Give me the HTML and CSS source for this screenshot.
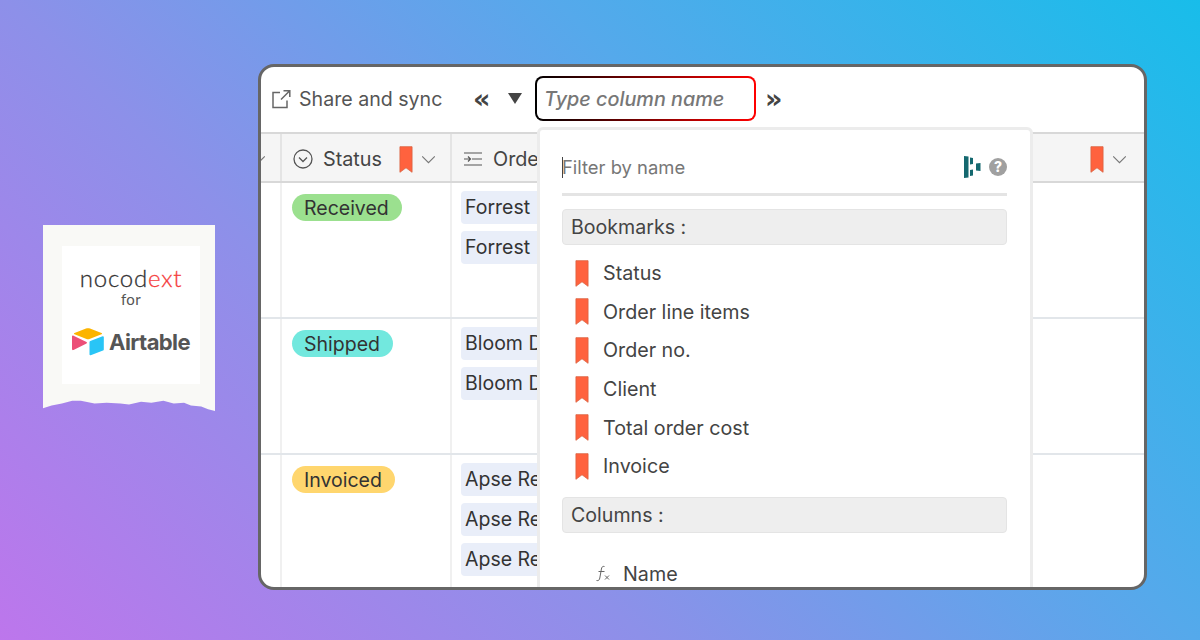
FILE: index.html
```html
<!DOCTYPE html>
<html lang="en">
<head>
<meta charset="utf-8">
<title>nocodext for Airtable</title>
<link rel="stylesheet" href="styles.css">
</head>
<body>
<svg class="defs" width="0" height="0" aria-hidden="true">
  <symbol id="mark" viewBox="0 0 14 28"><path d="M.7.7h12.600v26.600L7 22.600.7 27.300z" fill="#ff623e" stroke="#d9603f" stroke-width=".8"/></symbol>
  <symbol id="chev" viewBox="0 0 16 10"><path d="M1 1.500l7 7 7-7" fill="none" stroke="#777" stroke-width="1.300"/></symbol>
</svg>
<main class="stage">
  <aside class="card">
    <div class="card-inner">
      <div class="brand">nocod<span class="brand-red">ext</span></div>
      <div class="for">for</div>
      <div class="airtable">
        <svg class="at-logo" viewBox="0 0 32 28" width="32" height="28" aria-hidden="true">
          <path d="M14 .5 2.500 5c-.7.3-.7 1 0 1.300L14.500 11c1 .4 2 .4 3 0L29.500 6.300c.7-.3.7-1 0-1.300L18 .5c-1.300-.5-2.700-.5-4 0z" fill="#fcb400"/>
          <path d="M17.500 14v12.500c0 .6.600 1 1.200.8L31 22.500c.5-.2.8-.6.800-1.100V9c0-.6-.6-1-1.200-.8L18.300 13c-.5.200-.8.500-.8 1z" fill="#29c5f6"/>
          <path d="M0 8.500v12.800c0 .7.800 1.200 1.500.8L14.500 15.500c.6-.3.600-1.100 0-1.400L1.500 7.700C.8 7.400 0 7.800 0 8.500z" fill="#ec4f78"/>
        </svg>
        <span class="at-word">Airtable</span>
      </div>
    </div>
  </aside>

  <section class="window">
    <header class="toolbar">
      <div class="share">
        <svg class="share-icon" viewBox="0 0 20 20" width="20" height="20" aria-hidden="true"><path d="M9 3.500H2v15h14v-7M10 10.500 18.500 2M12.500 1.700h6.300V8" fill="none" stroke="#666" stroke-width="1.500"/></svg>
        <span>Share and sync</span>
      </div>
      <span class="nav nav-prev">«</span>
      <svg class="caret" viewBox="0 0 14 11" width="14" height="11" aria-hidden="true"><path d="M0 0h14L7 11z" fill="#444"/></svg>
      <div class="search"><span>Type column name</span></div>
      <span class="nav nav-next">»</span>
    </header>

    <div class="table">
      <div class="head">
        <div class="hcell hcell-edge"><svg class="chev chev-edge"><use href="#chev"/></svg></div>
        <div class="hcell hcell-status">
          <svg class="status-icon" viewBox="0 0 20 20" width="20" height="20" aria-hidden="true"><circle cx="10" cy="10" r="9" fill="none" stroke="#555" stroke-width="1.300"/><path d="M6 8.500l4 4 4-4" fill="none" stroke="#555" stroke-width="1.300"/></svg>
          <span class="hlabel">Status</span>
          <svg class="mark-head"><use href="#mark"/></svg>
          <svg class="chev"><use href="#chev"/></svg>
        </div>
        <div class="hcell hcell-order">
          <svg class="lines-icon" viewBox="0 0 20 16" width="20" height="16" aria-hidden="true"><path d="M1 2h18M9 8h10M1 14h18M1 8h6M5 5.500 7.500 8 5 10.500" fill="none" stroke="#555" stroke-width="1.200"/></svg>
          <span class="hlabel">Order</span>
        </div>
        <div class="hcell hcell-end">
          <svg class="mark-head"><use href="#mark"/></svg>
          <svg class="chev"><use href="#chev"/></svg>
        </div>
      </div>

      <div class="row">
        <div class="cell"></div>
        <div class="cell cell-status"><span class="pill pill-green">Received</span></div>
        <div class="cell cell-items"><span class="chip">Forrest</span><span class="chip">Forrest</span></div>
        <div class="cell cell-end"></div>
      </div>
      <div class="row">
        <div class="cell"></div>
        <div class="cell cell-status"><span class="pill pill-teal">Shipped</span></div>
        <div class="cell cell-items"><span class="chip">Bloom D</span><span class="chip">Bloom D</span></div>
        <div class="cell cell-end"></div>
      </div>
      <div class="row">
        <div class="cell"></div>
        <div class="cell cell-status"><span class="pill pill-yellow">Invoiced</span></div>
        <div class="cell cell-items"><span class="chip">Apse Re</span><span class="chip">Apse Re</span><span class="chip">Apse Re</span></div>
        <div class="cell cell-end"></div>
      </div>
    </div>

    <div class="popup">
      <div class="filter">
        <span class="cursor"></span>
        <span class="filter-text">Filter by name</span>
        <svg class="dash-icon" viewBox="0 0 17 22" width="17" height="22" aria-hidden="true"><path d="M0 0l4.500.6v20.800L0 22zM6 1.500l3 .5v6l-3 .5zM6 14l3-.5v6l-3 .5zM12 7.500l4.500-.5v8l-4.500-.5z" fill="#14686f"/></svg>
        <span class="help">?</span>
      </div>
      <div class="section">Bookmarks :</div>
      <ul class="marks">
        <li class="mark-row"><svg class="mark-list"><use href="#mark"/></svg>Status</li>
        <li class="mark-row"><svg class="mark-list"><use href="#mark"/></svg>Order line items</li>
        <li class="mark-row"><svg class="mark-list"><use href="#mark"/></svg>Order no.</li>
        <li class="mark-row"><svg class="mark-list"><use href="#mark"/></svg>Client</li>
        <li class="mark-row"><svg class="mark-list"><use href="#mark"/></svg>Total order cost</li>
        <li class="mark-row"><svg class="mark-list"><use href="#mark"/></svg>Invoice</li>
      </ul>
      <div class="section">Columns :</div>
      <div class="column-row">
        <svg class="fx-icon" viewBox="0 0 16 18" width="16" height="18" aria-hidden="true"><path d="M9.500 1.500C7.500 1 6.800 2 6.400 4L4.800 13c-.4 2-1.200 3-3.300 2.500M3.500 6.500h6" fill="none" stroke="#666" stroke-width="1"/><path d="M10 10.500l4 4M14 10.500l-4 4" stroke="#666" stroke-width="1"/></svg>
        <span>Name</span>
      </div>
    </div>
  </section>
</main>
</body>
</html>
```

FILE: styles.css
```css
* { box-sizing: border-box; }

html, body { margin: 0; height: 640px; overflow: hidden; }

body {
  font-family: Inter, "Liberation Sans", sans-serif;
  color: #444;
  background: linear-gradient(45deg, #bd76ec 0%, #8d90e9 35%, #55a9eb 65%, #18bdea 100%);
}

.defs { position: absolute; }

.stage {
  display: flex;
  align-items: flex-start;
  gap: 43px;
  height: 640px;
  padding: 64px 0 0 43px;
}

/* Logo card */
.card {
  flex: none;
  width: 172px;
  height: 187px;
  margin-top: 161px;
  padding: 21px 15px 0 19px;
  background: #f9f9f6;
  clip-path: polygon(0 0, 100% 0, 100% 99.500%, 96% 98.500%, 92% 97%, 86% 96.500%, 82% 95%, 76% 95.500%, 70% 94%, 63% 95%, 57% 94.500%, 50% 96%, 45% 95.500%, 37% 95%, 30% 95.500%, 22% 94%, 17% 94%, 11% 95.500%, 5% 96.500%, 0 98%);
}

.card-inner {
  display: flex;
  flex-direction: column;
  align-items: center;
  height: 138px;
  padding-top: 20px;
  background: #fff;
}

.brand {
  font-family: Lato, sans-serif;
  font-size: 24px;
  font-weight: 300;
  line-height: 24px;
  letter-spacing: .8px;
  color: #333;
  -webkit-text-stroke: .3px currentColor;
}

.brand-red { color: #f53c3c; }

.for {
  font-family: Lato, sans-serif;
  font-size: 15px;
  line-height: 18px;
  letter-spacing: .4px;
  color: #555;
}

.airtable {
  display: flex;
  align-items: center;
  gap: 5px;
  margin-top: 20px;
}

.at-word {
  font-size: 22px;
  font-weight: 700;
  letter-spacing: -.6px;
  color: #555;
}

/* Window */
.window {
  position: relative;
  flex: none;
  width: 889px;
  height: 526px;
  overflow: hidden;
  background: #fff;
  border: 3px solid #666;
  border-radius: 16px;
}

.toolbar {
  display: flex;
  align-items: center;
  height: 67px;
  padding: 0 0 2px 10px;
  border-bottom: 2px solid #d8d8d8;
  font-size: 19.600px;
  color: #555;
}

.share {
  display: flex;
  align-items: center;
  gap: 8px;
  width: 202px;
}

.share-icon { flex: none; }

.nav {
  font-family: "DejaVu Sans", sans-serif;
  font-weight: 700;
  font-size: 27px;
  line-height: 1;
  color: #444;
}

.nav-prev { width: 35px; }

.caret { flex: none; margin-right: 13px; }

.nav-next { margin-left: 9px; }

.search {
  display: flex;
  align-items: center;
  width: 221px;
  height: 45px;
  padding-left: 7px;
  border: 2px solid transparent;
  border-radius: 8px;
  background:
    linear-gradient(#fff, #fff) padding-box,
    linear-gradient(90deg, #000, #ff0000) border-box;
  font-size: 19.800px;
  font-style: italic;
  font-weight: 500;
  color: #777;
}

/* Table */
.head,
.row {
  display: grid;
  grid-template-columns: 21px 170px 85px 1fr;
}

.head {
  height: 49px;
  background: #f5f5f5;
  border-bottom: 2px solid #d8d8d8;
}

.hcell {
  display: flex;
  align-items: center;
  padding-top: 3px;
  border-right: 2px solid #e4e4e4;
  font-size: 19.800px;
  color: #444;
}

.hcell-edge { overflow: hidden; }

.hcell-status { padding-left: 11px; }

.hcell-order {
  padding-left: 11px;
  overflow: hidden;
  white-space: nowrap;
  border-right: none;
}

.hcell-end {
  justify-content: flex-end;
  gap: 8px;
  padding-right: 17px;
  border-right: none;
}

.hlabel { margin-left: 10px; }

.status-icon, .lines-icon { flex: none; }

.mark-head {
  flex: none;
  width: 14px;
  height: 27px;
}

.hcell-status .mark-head { margin: 0 8px 0 17px; }

.chev {
  flex: none;
  width: 15px;
  height: 9px;
}

.chev-edge { margin-left: -10px; }

.row {
  height: 136px;
  border-bottom: 2px solid #e2e6ea;
}

.cell { border-right: 2px solid #f0f0f0; }

.cell-status { padding-top: 11px; }

.cell-items {
  display: flex;
  flex-direction: column;
  gap: 7px;
  padding: 8px 0 0 9px;
  overflow: hidden;
  border-right: none;
}

.cell-end { border-right: none; }

.pill {
  display: inline-block;
  height: 27px;
  padding: 0 13px 0 12px;
  margin-left: 10px;
  border-radius: 14px;
  font-size: 19.500px;
  line-height: 28px;
  color: #333;
}

.pill-green { background: #9be08f; }
.pill-teal { background: #72e8de; }
.pill-yellow { background: #ffd66e; }

.chip {
  display: block;
  flex: none;
  width: 100%;
  height: 33px;
  padding-left: 4px;
  border-radius: 4px 0 0 4px;
  background: #e9eef9;
  font-size: 19.500px;
  line-height: 32px;
  white-space: nowrap;
  color: #333;
}

.row:last-child { height: 140px; border-bottom: none; }

/* Popup */
.popup {
  position: absolute;
  top: 60px;
  left: 276px;
  width: 496px;
  height: 470px;
  padding: 0 23px 0 22px;
  background: #fff;
  border: 3px solid #ececec;
  border-radius: 6px 6px 0 0;
}

.filter {
  display: flex;
  align-items: center;
  height: 66px;
  padding-top: 11px;
  border-bottom: 3px solid #e4e4e4;
}

.cursor {
  flex: none;
  width: 1px;
  height: 21px;
  background: #444;
}

.filter-text {
  flex: 1;
  margin-left: -1px;
  font-size: 18.400px;
  color: #777;
}

.dash-icon { flex: none; margin-right: 8px; }

.help {
  flex: none;
  width: 18px;
  height: 18px;
  border-radius: 50%;
  background: #a0a0a0;
  color: #fff;
  font-size: 14px;
  font-weight: 800;
  line-height: 18px;
  text-align: center;
}

.section {
  height: 36px;
  padding-left: 8px;
  border: 1px solid #e4e4e4;
  border-radius: 4px;
  background: #eee;
  font-size: 19.600px;
  line-height: 35px;
  color: #444;
}

.filter + .section { margin-top: 13px; }

.marks {
  list-style: none;
  margin: 9px 0 11px;
  padding: 0;
}

.mark-row {
  display: flex;
  align-items: center;
  height: 38.600px;
  padding-left: 13px;
  font-size: 19.700px;
  color: #444;
}

.mark-list {
  flex: none;
  width: 14px;
  height: 27px;
  margin-right: 14px;
}

.column-row {
  display: flex;
  align-items: center;
  gap: 12px;
  margin-top: 29px;
  padding-left: 33px;
  font-size: 19.700px;
  color: #444;
}
```
